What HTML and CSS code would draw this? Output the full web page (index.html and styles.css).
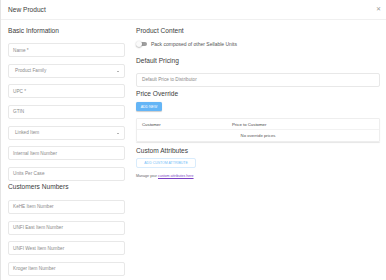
FILE: index.html
```html
<!DOCTYPE html>
<html lang="en">
<head>
  <meta charset="UTF-8" />
  <title>New Product</title>
  <link rel="stylesheet" href="styles.css">
</head>
<body>
  <div class="dialog">
    <div class="dialog-header">
      <span class="dialog-title">New Product</span>
      <span class="close-btn">&#x2715;</span>
    </div>

    <div class="dialog-body">
      <div class="col-left">
        <h3 class="section-title">Basic Information</h3>
        <div class="field-list">
          <div class="field">Name *</div>
          <div class="field select">Product Family<span class="arrow"></span></div>
          <div class="field">UPC *</div>
          <div class="field">GTIN</div>
          <div class="field select">Linked Item<span class="arrow"></span></div>
          <div class="field">Internal Item Number</div>
          <div class="field">Units Per Case</div>
        </div>

        <h3 class="section-title customers">Customers Numbers</h3>
        <div class="field-list">
          <div class="field">KeHE Item Number</div>
          <div class="field">UNFI East Item Number</div>
          <div class="field">UNFI West Item Number</div>
          <div class="field">Kroger Item Number</div>
        </div>
      </div>

      <div class="col-right">
        <h3 class="section-title">Product Content</h3>
        <div class="toggle-row">
          <span class="toggle"><span class="toggle-thumb"></span></span>
          <span class="toggle-label">Pack composed of other Sellable Units</span>
        </div>

        <h3 class="section-title pricing">Default Pricing</h3>
        <div class="field wide">Default Price to Distributor</div>

        <h3 class="section-title override">Price Override</h3>
        <button class="btn-add">ADD NEW</button>

        <div class="price-table">
          <div class="table-row table-head">
            <span class="cell-customer">Customer</span>
            <span class="cell-price">Price to Customer</span>
          </div>
          <div class="table-row table-empty">No override prices</div>
        </div>

        <h3 class="section-title attrs">Custom Attributes</h3>
        <button class="btn-outline">ADD CUSTOM ATTRIBUTE</button>
        <p class="manage-note">Manage your <a href="#">custom attributes here</a></p>
      </div>
    </div>
  </div>
</body>
</html>
```

FILE: styles.css
```css
* {
  box-sizing: border-box;
}

body {
  margin: 0;
  font-family: 'Liberation Sans', Arial, sans-serif;
  background: #fff;
  color: #333;
}

.dialog {
  border-left: 1px solid #e4e4e4;
  height: 280px;
  overflow: hidden;
}

.dialog-header {
  height: 20px;
  display: flex;
  align-items: center;
  justify-content: space-between;
  padding: 0 5px 1px 7px;
  border-bottom: 1px solid #f0f0f0;
}

.dialog-title {
  font-size: 6.6px;
  color: #3c3c3c;
}

.close-btn {
  font-size: 5.5px;
  color: #999;
}

.dialog-body {
  display: flex;
  gap: 11px;
  padding: 6px 6px 0 7px;
}

.col-left {
  width: 117px;
  flex-shrink: 0;
}

.col-right {
  flex: 1;
}

.section-title {
  margin: 0;
  height: 10px;
  line-height: 10px;
  font-size: 6.6px;
  font-weight: normal;
  color: #3c3c3c;
}

.field-list {
  display: flex;
  flex-direction: column;
  gap: 6.67px;
  margin-top: 7px;
}

.field {
  height: 14px;
  display: flex;
  align-items: center;
  padding: 0 4px;
  border: 1px solid #e8e8e8;
  border-radius: 2px;
  font-size: 4.7px;
  color: #8a8a8a;
  position: relative;
}

.field.select {
  padding-left: 6px;
}

.arrow {
  position: absolute;
  right: 5px;
  top: 6px;
  border-left: 1.5px solid transparent;
  border-right: 1.5px solid transparent;
  border-top: 1.5px solid #666;
}

.section-title.customers {
  margin-top: 1px;
}

.field-list + .section-title + .field-list {
  margin-top: 8px;
}

/* colonne droite */

.toggle-row {
  display: flex;
  align-items: center;
  height: 8px;
  margin-top: 4px;
}

.toggle {
  position: relative;
  width: 10px;
  height: 4px;
  margin-left: 1px;
  background: #9e9e9e;
  border-radius: 2px;
}

.toggle-thumb {
  position: absolute;
  left: -1px;
  top: -1.5px;
  width: 6px;
  height: 6px;
  border-radius: 50%;
  background: #fafafa;
  box-shadow: 0 0.5px 1.5px rgba(0, 0, 0, 0.4);
}

.toggle-label {
  margin-left: 4px;
  font-size: 5px;
  color: #555;
}

.section-title.pricing {
  margin-top: 8px;
}

.field.wide {
  margin-top: 7px;
  height: 13.5px;
  padding-left: 5px;
}

.section-title.override {
  margin-top: 2.5px;
}

.btn-add {
  display: block;
  margin-top: 3px;
  width: 26px;
  height: 9px;
  padding: 0;
  border: none;
  border-radius: 1.5px;
  background: #64b5f6;
  color: #fff;
  font-family: inherit;
  font-size: 3.5px;
  box-shadow: 0 0.5px 1px rgba(0, 0, 0, 0.2);
}

.price-table {
  margin-top: 7px;
  border: 1px solid #eeeeee;
  border-radius: 1px;
  box-shadow: 0 1px 1px rgba(0, 0, 0, 0.1);
}

.table-row {
  height: 11px;
  display: flex;
  align-items: center;
  font-size: 4.3px;
  color: #444;
}

.table-head {
  border-bottom: 1px solid #f2f2f2;
}

.cell-customer {
  width: 95px;
  padding-left: 5px;
}

.table-empty {
  justify-content: center;
  color: #555;
}

.section-title.attrs {
  margin-top: 4px;
}

.btn-outline {
  display: block;
  margin-top: 2px;
  height: 10px;
  width: 60px;
  padding: 0;
  border: 1px solid #d9ecfc;
  border-radius: 2px;
  background: #fff;
  color: #74bdf7;
  font-family: inherit;
  font-size: 3.5px;
}

.manage-note {
  margin: 6px 0 0;
  font-size: 3.6px;
  color: #666;
}

.manage-note a {
  color: #7b3fc4;
}
```
